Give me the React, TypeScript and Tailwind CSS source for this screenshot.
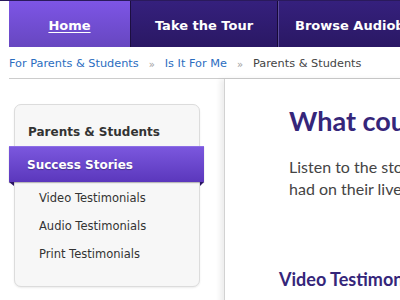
import React from "react";

export default function App() {
  const dv = { fontFamily: '"DejaVu Sans", Verdana, sans-serif' };
  const lato = { fontFamily: 'Lato, "Open Sans", sans-serif' };
  return (
    <div className="w-[400px] h-[300px] overflow-hidden bg-white relative">
      <div className="w-[900px]">
        {/* Nav */}
        <div className="flex h-[47px] border-t border-t-[#2a1a5c]" style={dv}>
          <div className="w-[9px] bg-white" />
          <div className="w-[122px] flex items-center justify-center pt-[3px] bg-gradient-to-b from-[#7d55e6] to-[#6747c0] border-r border-r-[#1c0e40]">
            <span className="text-white font-bold text-[13px] underline underline-offset-2">Home</span>
          </div>
          <div className="w-[147px] flex items-center justify-center pt-[3px] bg-gradient-to-b from-[#35207d] to-[#2a1864] border-r border-r-[#170a36]">
            <span className="text-white font-bold text-[13px] whitespace-nowrap">Take the Tour</span>
          </div>
          <div className="flex items-center pl-[16px] pr-[24px] pt-[3px] bg-gradient-to-b from-[#35207d] to-[#2a1864] border-l border-l-[#5c4c9c]">
            <span className="text-white font-bold text-[13px] whitespace-nowrap">Browse Audiobooks</span>
          </div>
        </div>

        {/* Breadcrumb */}
        <div className="pl-[9px] pt-[9px]" style={dv}>
          <div className="flex items-center h-[16px] text-[11.3px] whitespace-nowrap">
            <span className="text-[#2b6dbf]">For Parents &amp; Students</span>
            <span className="text-[#a0a0a0] text-[10px] mx-[10px]">»</span>
            <span className="text-[#2b6dbf]">Is It For Me</span>
            <span className="text-[#a0a0a0] text-[10px] mx-[10px]">»</span>
            <span className="text-[#444]">Parents &amp; Students</span>
          </div>
          <div className="mt-[6px] h-px bg-[#cccccc]" />
        </div>

        {/* Main */}
        <div className="flex">
          <div className="w-[224px] shrink-0 pt-[25px]">
            <div className="ml-[14px] w-[186px] rounded-[7px] border border-[#dcdcdc] bg-[#f7f7f7] shadow-[0_1px_2px_rgba(0,0,0,0.08)] pb-[17px]" style={dv}>
              <div className="pt-[19px] h-[35px] pl-[13px] text-[12px] font-bold text-[#333] leading-[16px] whitespace-nowrap">
                Parents &amp; Students
              </div>
              <div className="mt-[6px] -ml-[6px] -mr-[5px] relative">
                <div className="h-[36px] flex items-center pl-[18px] pt-[1px] bg-gradient-to-b from-[#7b57de] to-[#5b37bc] border-t border-t-[#8d6ee6] shadow-[0_1px_1px_rgba(0,0,0,0.25)]">
                  <span className="text-white font-bold text-[12px] whitespace-nowrap [text-shadow:0_1px_1px_rgba(0,0,0,0.3)]">Success Stories</span>
                </div>
                <div className="absolute left-0 top-[36px] w-0 h-0 border-t-[4px] border-t-[#2a1462] border-l-[5px] border-l-transparent" />
                <div className="absolute right-0 top-[36px] w-0 h-0 border-t-[4px] border-t-[#2a1462] border-r-[4px] border-r-transparent" />
              </div>
              <div className="pl-[24px] pt-[3px] text-[11.5px] text-[#333]">
                <div className="h-[28px] flex items-center">Video Testimonials</div>
                <div className="h-[28px] flex items-center">Audio Testimonials</div>
                <div className="h-[28px] flex items-center">Print Testimonials</div>
              </div>
            </div>
          </div>

          <div className="flex-1 min-h-[230px] border-l border-l-[#d2d2d2] shadow-[-4px_0_5px_rgba(0,0,0,0.07)]" style={lato}>
            <div className="pl-[64px] pt-[26px] whitespace-nowrap">
              <div className="text-[27px] leading-[32px] font-bold text-[#35267a]">What could audiobooks do for you?</div>
              <div className="mt-[19px] text-[16px] leading-[22px] text-[#444]">
                Listen to the stories of the impact that audiobooks have
                <br />
                had on their lives.
              </div>
            </div>
            <div className="pl-[54px] mt-[67px] text-[18px] leading-[24px] font-bold text-[#35267a] whitespace-nowrap">
              Video Testimonials
            </div>
          </div>
        </div>
      </div>
    </div>
  );
}
